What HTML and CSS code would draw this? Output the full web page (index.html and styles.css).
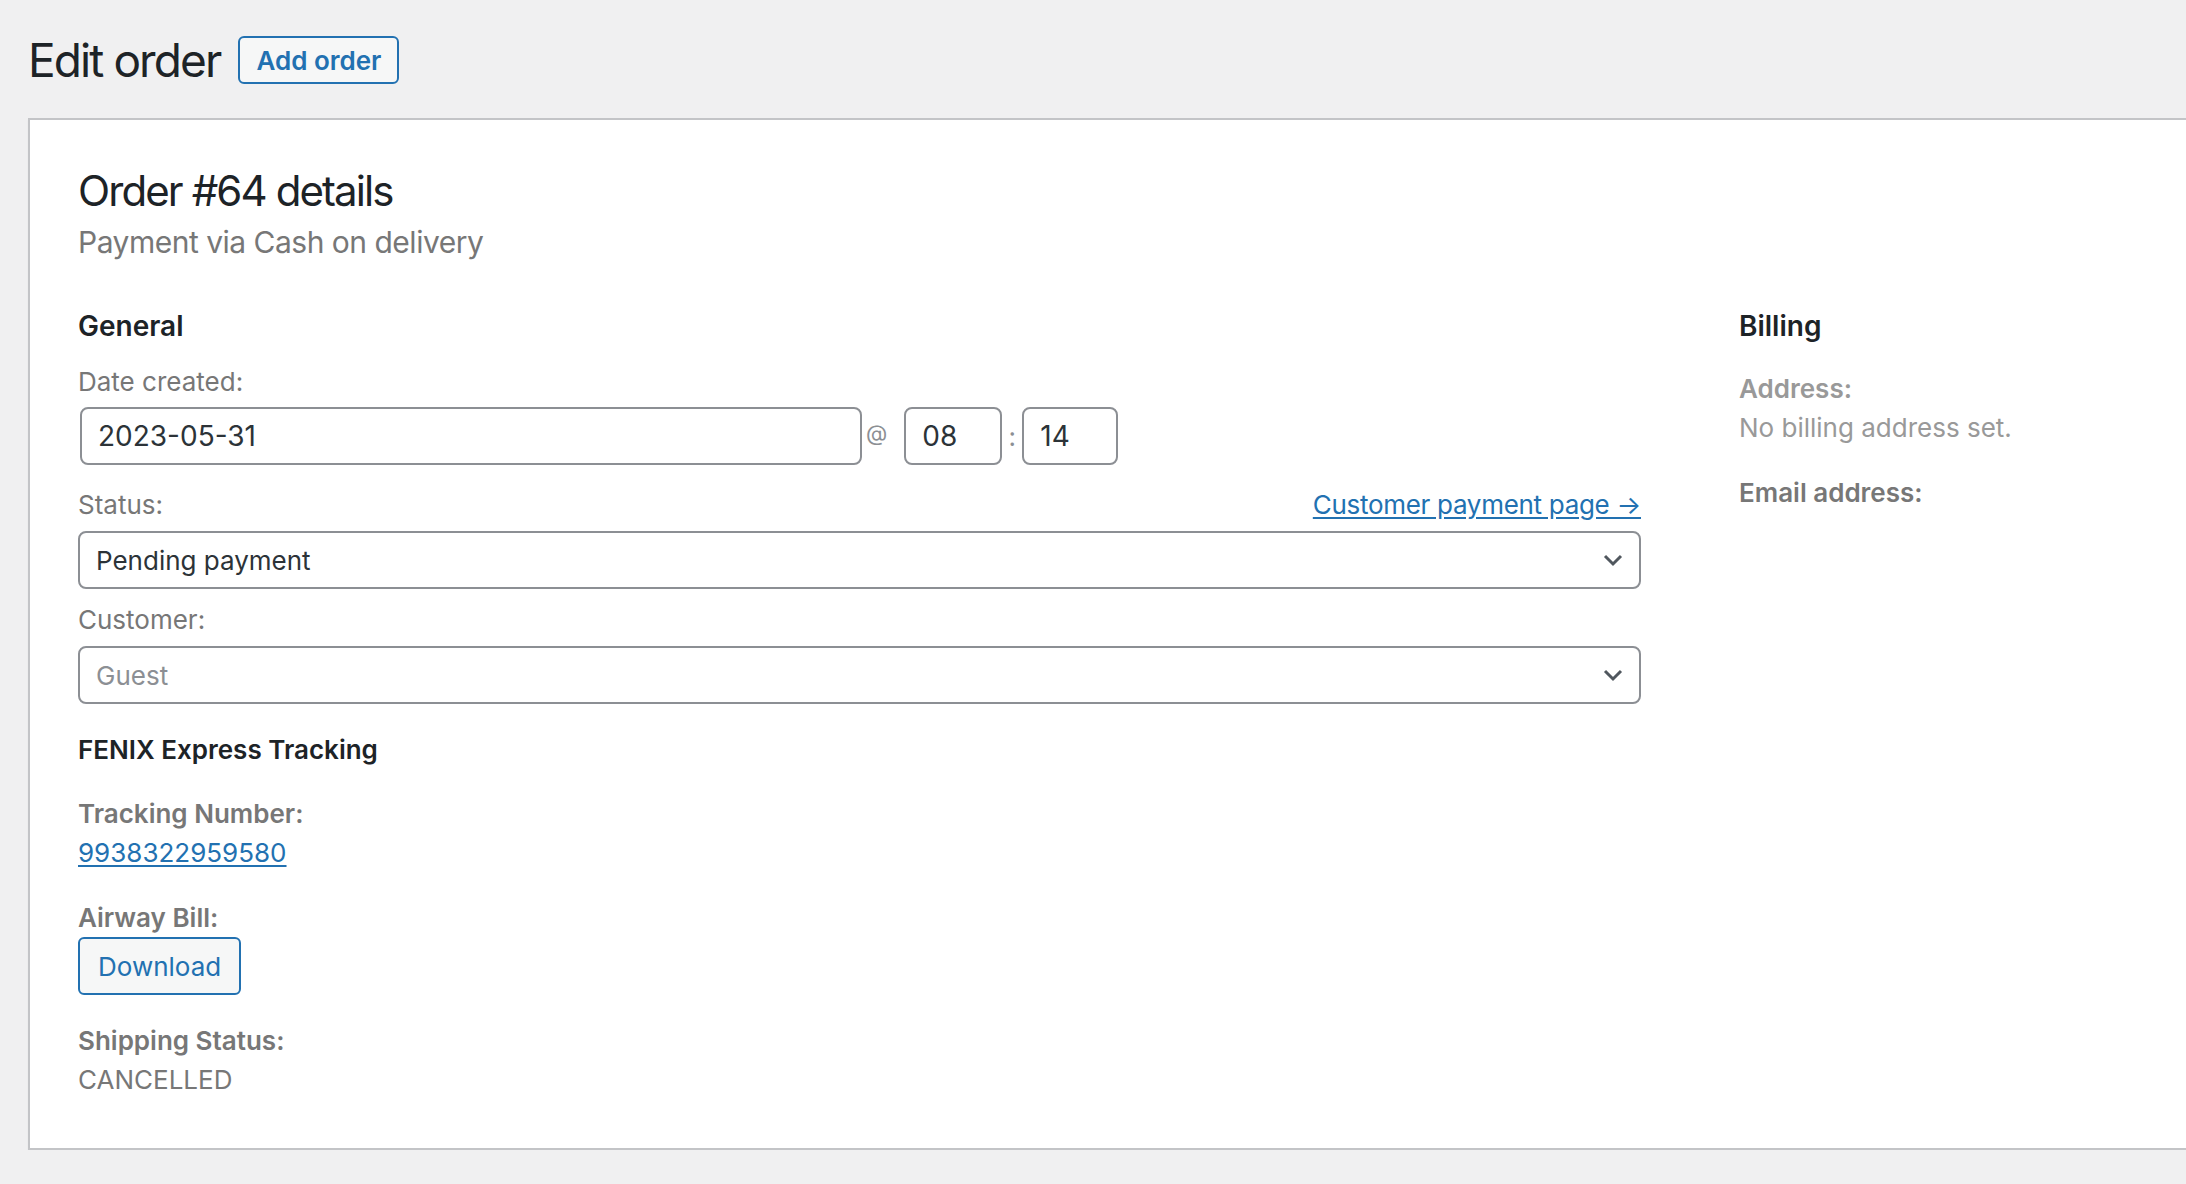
FILE: index.html
```html
<!DOCTYPE html>
<html lang="en">
<head>
    <meta charset="UTF-8">
    <meta name="viewport" content="width=device-width, initial-scale=1.0">
    <title>Edit order</title>
    <link rel="stylesheet" href="styles.css">
</head>
<body>
    <div class="wrap">
        <div class="page-head">
            <h1>Edit order</h1>
            <a class="page-action" href="#">Add order</a>
        </div>

        <div class="panel">
            <h2>Order #64 details</h2>
            <p class="order-meta">Payment via Cash on delivery</p>

            <div class="columns">
                <div class="col">
                    <h3>General</h3>

                    <label class="field-label" for="order-date">Date created:</label>
                    <div class="date-row">
                        <input class="text-input date-input" id="order-date" type="text" value="2023-05-31">
                        <span class="at">@</span>
                        <input class="text-input hour-input" type="text" value="08">
                        <span class="colon">:</span>
                        <input class="text-input minute-input" type="text" value="14">
                    </div>

                    <div class="label-row">
                        <label class="field-label">Status:</label>
                        <a class="link" href="#">Customer payment page &rarr;</a>
                    </div>
                    <div class="select">
                        <span>Pending payment</span>
                        <svg class="chevron" width="20" height="13" viewBox="0 0 20 13"><path d="M2 2 L10 10 L18 2" fill="none" stroke="#50575e" stroke-width="3"/></svg>
                    </div>

                    <label class="field-label customer-label">Customer:</label>
                    <div class="select placeholder">
                        <span>Guest</span>
                        <svg class="chevron" width="20" height="13" viewBox="0 0 20 13"><path d="M2 2 L10 10 L18 2" fill="none" stroke="#50575e" stroke-width="3"/></svg>
                    </div>

                    <h4 class="tracking-title">FENIX Express Tracking</h4>

                    <p class="info"><strong>Tracking Number:</strong><br><a class="link" href="#">9938322959580</a></p>

                    <p class="info"><strong>Airway Bill:</strong></p>
                    <a class="button" href="#">Download</a>

                    <p class="info"><strong>Shipping Status:</strong><br>CANCELLED</p>
                </div>

                <div class="col">
                    <h3>Billing</h3>
                    <p class="info none-set"><strong>Address:</strong><br>No billing address set.</p>
                    <p class="info"><strong>Email address:</strong></p>
                </div>
            </div>
        </div>
    </div>
</body>
</html>
```

FILE: styles.css
```css
body {
    margin: 0;
    background: #f0f0f1;
    font-family: 'Inter', 'Liberation Sans', sans-serif;
    color: #3c434a;
    overflow: hidden;
}
.wrap {
    padding: 36px 0 0 28px;
}
.page-head {
    display: flex;
    align-items: center;
}
h1 {
    margin: 0 18px 0 0;
    font-size: 46px;
    line-height: 48px;
    font-weight: 400;
    letter-spacing: -1.9px;
    color: #1d2327;
}
.page-action {
    display: inline-flex;
    align-items: center;
    height: 48px;
    box-sizing: border-box;
    padding: 0 16px;
    border: 2px solid #2271b1;
    border-radius: 6px;
    background: #f6f7f7;
    color: #2271b1;
    font-size: 26px;
    font-weight: 600;
    text-decoration: none;
}
.panel {
    margin-top: 34px;
    background: #fff;
    border: 2px solid #c3c4c7;
    border-right: 0;
    box-shadow: 0 2px 2px rgba(0, 0, 0, 0.04);
    padding: 46px 0 49px 48px;
}
h2 {
    margin: 0;
    font-size: 42px;
    line-height: 50px;
    font-weight: 400;
    letter-spacing: -1.9px;
    color: #1d2327;
}
.order-meta {
    margin: 4px 0 0;
    font-size: 30px;
    line-height: 44px;
    letter-spacing: -0.5px;
    color: #777;
}
.columns {
    display: grid;
    grid-template-columns: 1563px 1fr;
    column-gap: 98px;
    margin-top: 42px;
}
.col {
    display: flex;
    flex-direction: column;
    align-items: flex-start;
}
h3 {
    margin: 0 0 18px;
    font-size: 28px;
    line-height: 40px;
    font-weight: 600;
    color: #1d2327;
}
.field-label {
    display: block;
    font-size: 26px;
    line-height: 36px;
    color: #777;
}
.date-row {
    display: flex;
    align-items: center;
    margin-top: 7px;
}
.text-input {
    height: 58px;
    box-sizing: border-box;
    margin: 0;
    padding: 0 16px;
    border: 2px solid #8c8f94;
    border-radius: 8px;
    font-family: inherit;
    font-size: 28px;
    color: #2c3338;
    background: #fff;
}
.date-input {
    width: 782px;
    margin-left: 2px;
}
.hour-input {
    width: 98px;
}
.minute-input {
    width: 96px;
}
.at {
    margin: -6px 17px 0 4px;
    font-size: 22px;
    color: #8c8f94;
}
.colon {
    width: 20px;
    text-align: center;
    font-size: 26px;
    color: #8c8f94;
}
.label-row {
    display: flex;
    justify-content: space-between;
    align-items: baseline;
    width: 1563px;
    margin-top: 22px;
}
.link {
    color: #2271b1;
    font-size: 26px;
    text-decoration: underline;
    text-underline-offset: 3px;
}
.label-row .link {
    letter-spacing: -0.3px;
}
.select {
    display: flex;
    justify-content: space-between;
    align-items: center;
    width: 1563px;
    height: 58px;
    box-sizing: border-box;
    margin-top: 8px;
    padding: 0 16px;
    border: 2px solid #8c8f94;
    border-radius: 8px;
    font-size: 26px;
    color: #2c3338;
}
.select.placeholder {
    color: #8c8f94;
}
.customer-label {
    margin-top: 13px;
}
.tracking-title {
    margin: 28px 0 0;
    font-size: 26px;
    line-height: 36px;
    font-weight: 600;
    color: #1d2327;
}
.info {
    margin: 26px 0 0;
    font-size: 26px;
    line-height: 39px;
    color: #777;
}
.info strong {
    font-weight: 600;
}
.col > h3 + .info {
    margin-top: 5px;
}
.none-set {
    color: #999;
}
.button {
    display: inline-flex;
    align-items: center;
    height: 58px;
    box-sizing: border-box;
    padding: 0 18px;
    border: 2px solid #2271b1;
    border-radius: 6px;
    background: #f6f7f7;
    color: #2271b1;
    font-size: 26px;
    text-decoration: none;
}
```
